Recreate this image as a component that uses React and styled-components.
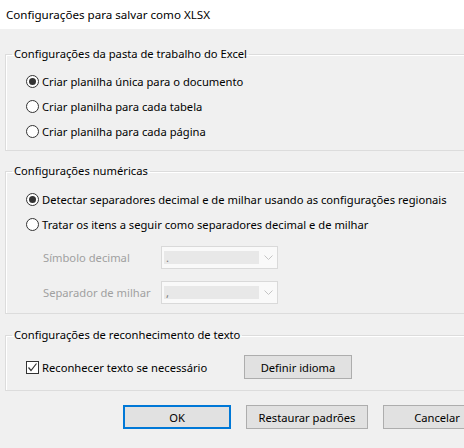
import React, { useState } from 'react';
import styled, { createGlobalStyle } from 'styled-components';

const FONT_SIZE = 11.2;

const GlobalStyle = createGlobalStyle`
  html, body {
    margin: 0;
    padding: 0;
    background: #f0f0f0;
  }
  body {
    font-family: "Segoe UI", "Noto Sans", "Liberation Sans", sans-serif;
    font-size: ${FONT_SIZE}px;
    color: #000000;
  }
`;

const Viewport = styled.div`
  width: 464px;
  height: 448px;
  overflow: hidden;
  background: #f0f0f0;
`;

const Dialog = styled.div`
  width: 500px;
  display: flex;
  flex-direction: column;
`;

const TitleBar = styled.div`
  height: 29px;
  background: #ffffff;
  display: flex;
  align-items: center;
  padding-left: 6px;
  padding-bottom: 1px;
  box-sizing: border-box;
  font-size: 11.6px;
`;

const Body = styled.div`
  display: flex;
  flex-direction: column;
  padding: 17px 0 0 5px;
`;

const Group = styled.fieldset`
  margin: ${p => p.$top || 0}px 0 0 0;
  padding: ${p => p.$pt || 0}px 0 ${p => p.$pb || 0}px 20px;
  border: 1px solid #dcdcdc;
  box-shadow: inset 1px 1px 0 #ffffff;
  min-width: 0;
  display: flex;
  flex-direction: column;
`;

const Legend = styled.legend`
  margin-left: -14px;
  padding: 0 2px;
  height: 16px;
  line-height: 16px;
`;

const OptionRow = styled.label`
  height: 25px;
  display: flex;
  align-items: center;
  gap: 3px;
  white-space: nowrap;
`;

const RadioDot = styled.span`
  width: 13px;
  height: 13px;
  box-sizing: border-box;
  border: 1px solid #333333;
  border-radius: 50%;
  background: #ffffff;
  display: flex;
  align-items: center;
  justify-content: center;
  flex: none;
  &::after {
    content: '';
    width: 7px;
    height: 7px;
    border-radius: 50%;
    background: ${p => (p.$on ? '#333333' : 'transparent')};
  }
`;

const CheckBox = styled.span`
  width: 13px;
  height: 13px;
  box-sizing: border-box;
  border: 1px solid #333333;
  background: #ffffff;
  display: flex;
  align-items: center;
  justify-content: center;
  flex: none;
`;

const FieldRow = styled.div`
  height: 23px;
  display: flex;
  align-items: center;
  margin-top: ${p => p.$top || 0}px;
  padding-left: 17px;
`;

const FieldLabel = styled.span`
  width: 118px;
  color: #a0a0a0;
  white-space: nowrap;
`;

const Combo = styled.div`
  width: 117px;
  height: 23px;
  box-sizing: border-box;
  border: 1px solid #d9d9d9;
  background: #f9f9f9;
  display: flex;
  align-items: center;
  padding: 0 0 0 2px;
`;

const ComboField = styled.div`
  width: 95px;
  height: 13px;
  background: #e8e8e8;
  color: #7a7a7a;
  line-height: 14px;
  padding-left: 2px;
  box-sizing: border-box;
  overflow: hidden;
`;

const ComboArrow = styled.div`
  flex: 1;
  display: flex;
  justify-content: center;
  align-items: center;
`;

const CheckRow = styled.div`
  display: flex;
  align-items: center;
  height: 24px;
`;

const CheckLabel = styled.label`
  width: 218px;
  display: flex;
  align-items: center;
  gap: 3px;
  white-space: nowrap;
`;

const Button = styled.button`
  width: ${p => p.$w || 108}px;
  height: 24px;
  box-sizing: border-box;
  border: ${p => (p.$primary ? '2px solid #0078d7' : '1px solid #adadad')};
  background: #e1e1e1;
  font-family: inherit;
  font-size: ${FONT_SIZE}px;
  color: #000000;
  padding: 0;
  flex: none;
`;

const ButtonBar = styled.div`
  display: flex;
  gap: 15px;
  padding: 14px 0 0 118px;
`;

const Radio = ({ on, children, onSelect }) => (
  <OptionRow onClick={onSelect}>
    <RadioDot $on={on} />
    <span>{children}</span>
  </OptionRow>
);

const Chevron = () => (
  <svg width="9" height="5" viewBox="0 0 9 5">
    <path d="M0.5 0.5 L4.5 4.5 L8.5 0.5" fill="none" stroke="#c4c4c4" strokeWidth="1" />
  </svg>
);

const Check = () => (
  <svg width="11" height="11" viewBox="0 0 11 11">
    <path d="M1.5 5.5 L4 8.5 L9.5 1.5" fill="none" stroke="#333333" strokeWidth="1.2" />
  </svg>
);

const App = () => {
  const [sheetMode, setSheetMode] = useState(0);
  const [numMode, setNumMode] = useState(0);

  return (
    <>
      <GlobalStyle />
      <Viewport>
        <Dialog>
          <TitleBar>Configurações para salvar como XLSX</TitleBar>
          <Body>
            <Group $pt={7} $pb={6}>
              <Legend>Configurações da pasta de trabalho do Excel</Legend>
              <Radio on={sheetMode === 0} onSelect={() => setSheetMode(0)}>Criar planilha única para o documento</Radio>
              <Radio on={sheetMode === 1} onSelect={() => setSheetMode(1)}>Criar planilha para cada tabela</Radio>
              <Radio on={sheetMode === 2} onSelect={() => setSheetMode(2)}>Criar planilha para cada página</Radio>
            </Group>

            <Group $top={12} $pt={8} $pb={9}>
              <Legend>Configurações numéricas</Legend>
              <Radio on={numMode === 0} onSelect={() => setNumMode(0)}>Detectar separadores decimal e de milhar usando as configurações regionais</Radio>
              <Radio on={numMode === 1} onSelect={() => setNumMode(1)}>Tratar os itens a seguir como separadores decimal e de milhar</Radio>
              <FieldRow $top={9}>
                <FieldLabel>Símbolo decimal</FieldLabel>
                <Combo>
                  <ComboField>.</ComboField>
                  <ComboArrow><Chevron /></ComboArrow>
                </Combo>
              </FieldRow>
              <FieldRow $top={12}>
                <FieldLabel>Separador de milhar</FieldLabel>
                <Combo>
                  <ComboField>,</ComboField>
                  <ComboArrow><Chevron /></ComboArrow>
                </Combo>
              </FieldRow>
            </Group>

            <Group $top={13} $pt={12} $pb={11}>
              <Legend>Configurações de reconhecimento de texto</Legend>
              <CheckRow>
                <CheckLabel>
                  <CheckBox><Check /></CheckBox>
                  <span>Reconhecer texto se necessário</span>
                </CheckLabel>
                <Button $w={108}>Definir idioma</Button>
              </CheckRow>
            </Group>

            <ButtonBar>
              <Button $primary $w={108}>OK</Button>
              <Button $w={122}>Restaurar padrões</Button>
              <Button $w={108}>Cancelar</Button>
            </ButtonBar>
          </Body>
        </Dialog>
      </Viewport>
    </>
  );
};

export default App;
